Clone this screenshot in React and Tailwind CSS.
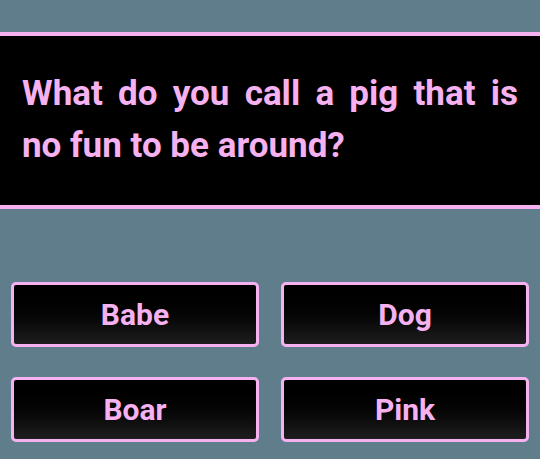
export default function App() {
  const font = { fontFamily: "Roboto, 'Noto Sans', sans-serif" };
  const answers = ["Babe", "Dog", "Boar", "Pink"];
  return (
    <div className="w-[540px] h-[459px] bg-[#607d8b] overflow-hidden" style={font}>
      <div className="pt-[32px]">
        <div className="border-y-4 border-[#f6b2f0] bg-black px-[22px] pt-[32px] pb-[33px]">
          <p className="text-[35px] leading-[52px] font-bold text-[#f6b2f0] text-justify">
            What do you call a pig that is no fun to be around?
          </p>
        </div>
      </div>
      <div className="grid grid-cols-2 gap-x-[22px] gap-y-[30px] px-[11px] pt-[73px]">
        {answers.map((a) => (
          <div
            key={a}
            className="h-[65px] rounded-[5px] border-[3px] border-[#f6b2f0] bg-gradient-to-b from-black to-[#1e1e1e] flex items-center justify-center"
          >
            <span className="text-[30px] font-bold text-[#f6b2f0]">{a}</span>
          </div>
        ))}
      </div>
    </div>
  );
}
